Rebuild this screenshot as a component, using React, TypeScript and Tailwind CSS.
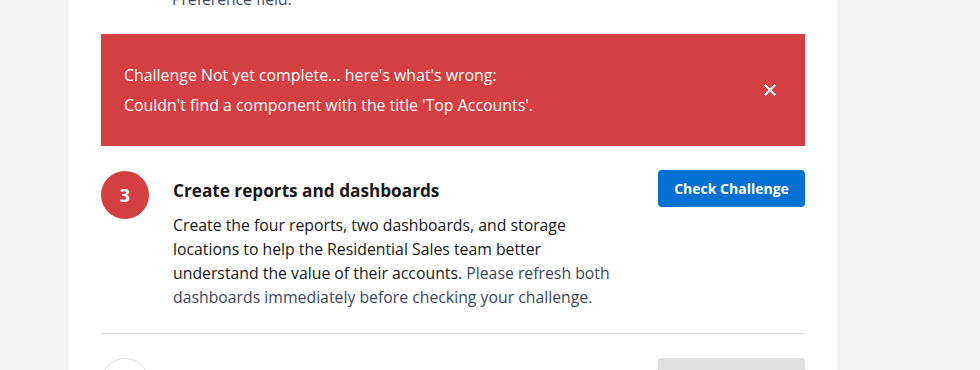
import React from "react";

export default function App() {
  const font = { fontFamily: "'Open Sans', 'Noto Sans', sans-serif" };
  return (
    <div className="w-[980px] h-[370px] bg-[#f3f3f3] overflow-hidden flex items-start" style={font}>
      <div className="w-[69px] shrink-0" />
      <div className="w-[768px] h-[370px] shrink-0 bg-white px-8 flex flex-col">
        <div className="shrink-0 pl-[71px] mt-[-13px] text-[15.7px] leading-6 text-[#3b4a5e]">Preference field.</div>
        <div className="shrink-0 mt-[23px] h-[112px] bg-[#d43f42] flex items-center justify-between pl-[23px] pr-[29px] text-white">
          <div className="text-[15.9px] leading-[30px]">
            <p>Challenge Not yet complete... here's what's wrong:</p>
            <p>Couldn't find a component with the title 'Top Accounts'.</p>
          </div>
          <svg width="12" height="12" viewBox="0 0 12 12">
            <path d="M1.5 1.5 L10.5 10.5 M10.5 1.5 L1.5 10.5" stroke="white" strokeWidth="2" strokeLinecap="square" />
          </svg>
        </div>
        <div className="shrink-0 mt-6 flex">
          <div className="w-12 h-12 rounded-full bg-[#d43f42] text-white flex items-center justify-center font-bold text-[18px] shrink-0 mt-px">3</div>
          <div className="ml-6">
            <h3 className="mt-[9px] text-[17.2px] leading-6 font-bold text-[#181818]">Create reports and dashboards</h3>
            <p className="mt-[10px] text-[15.8px] leading-6 text-[#181818] whitespace-nowrap">
              Create the four reports, two dashboards, and storage
              <br />
              locations to help the Residential Sales team better
              <br />
              understand the value of their accounts.{" "}
              <span className="text-[#3b4a5e]">
                Please refresh both
                <br />
                dashboards immediately before checking your challenge.
              </span>
            </p>
          </div>
          <div className="ml-auto">
            <button className="h-[37px] w-[147px] rounded bg-[#0070d2] text-white text-[14px] font-bold">Check Challenge</button>
          </div>
        </div>
        <div className="shrink-0 mt-6 border-t border-[#d8d8d8]" />
        <div className="shrink-0 mt-6 flex">
          <div className="w-12 h-12 rounded-full border border-[#dddddd] shrink-0" />
          <div className="ml-auto w-[147px] h-[37px] rounded bg-[#e0e0e0]" />
        </div>
      </div>
    </div>
  );
}
